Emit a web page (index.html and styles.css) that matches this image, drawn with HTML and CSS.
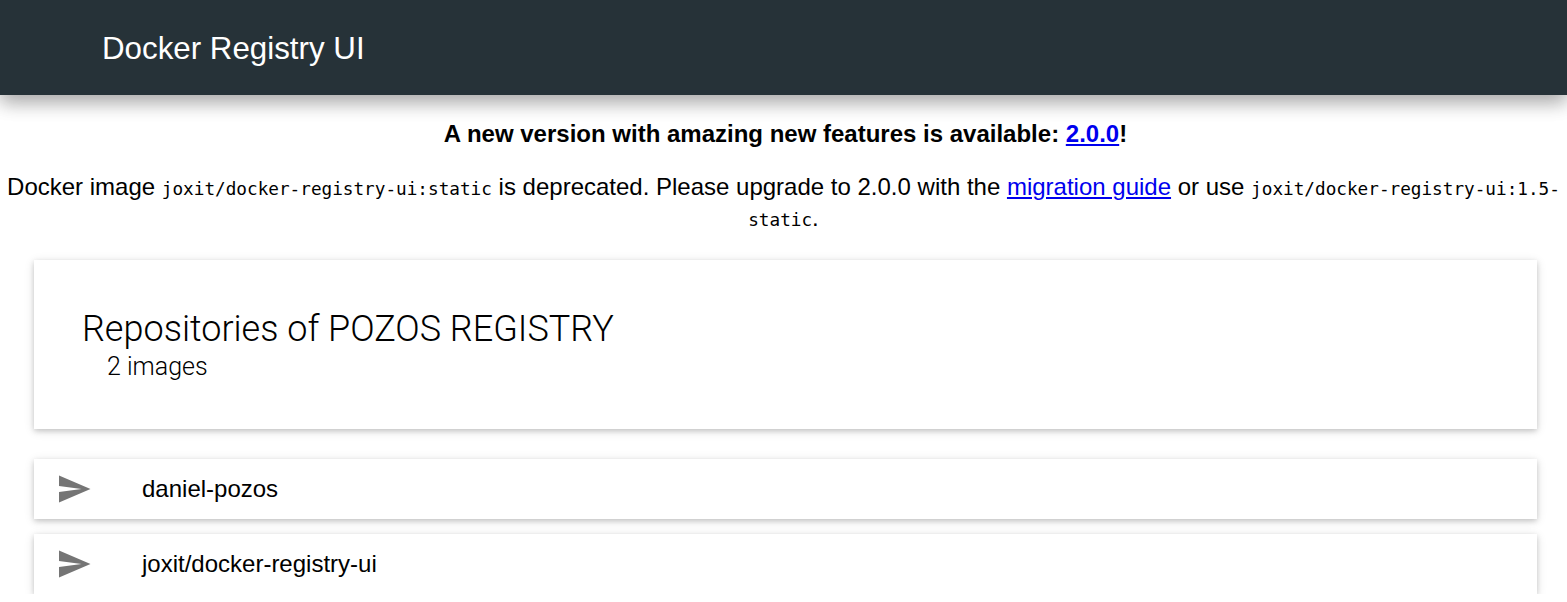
FILE: index.html
```html
<!DOCTYPE html>
<html lang="en">
<head>
<meta charset="utf-8">
<title>Docker Registry UI</title>
<link rel="stylesheet" href="styles.css">
</head>
<body>
<header class="topbar">
  <div class="brand">Docker Registry UI</div>
</header>
<main class="content">
  <p class="notice">A new version with amazing new features is available: <a href="#">2.0.0</a>!</p>
  <p class="deprecation">Docker image <code>joxit/docker-registry-ui:static</code> is deprecated. Please upgrade to 2.0.0 with the <a href="#">migration guide</a> or use <code>joxit/docker-registry-ui:1.5-static</code>.</p>
  <section class="card summary">
    <h2 class="summary-title">Repositories of POZOS REGISTRY</h2>
    <div class="summary-sub">2 images</div>
  </section>
  <ul class="repo-list">
    <li class="card repo">
      <svg class="repo-icon" viewBox="0 0 24 24"><path d="M2.01 21L23 12 2.01 3 2 10l15 2-15 2z"/></svg>
      <span class="repo-name">daniel-pozos</span>
    </li>
    <li class="card repo">
      <svg class="repo-icon" viewBox="0 0 24 24"><path d="M2.01 21L23 12 2.01 3 2 10l15 2-15 2z"/></svg>
      <span class="repo-name">joxit/docker-registry-ui</span>
    </li>
  </ul>
</main>
</body>
</html>
```
FILE: styles.css
```css
html, body {
  margin: 0;
  padding: 0;
  background: #ffffff;
}

body {
  font-family: "Liberation Sans", Arial, sans-serif;
  color: #000;
}

.topbar {
  height: 95px;
  background: #263238;
  box-shadow: 0 8px 17px 0 rgba(0, 0, 0, 0.2), 0 6px 20px 0 rgba(0, 0, 0, 0.19);
  display: flex;
  align-items: center;
  padding-left: 102px;
  position: relative;
  z-index: 2;
}

.brand {
  color: #ffffff;
  font-size: 31.3px;
  line-height: 36px;
  margin-top: 2px;
}

.content {
  padding: 0 30px 0 34px;
}

.notice {
  margin: 25px -30px 0 -34px;
  padding: 0 0 0 4px;
  text-align: center;
  font-weight: bold;
  font-size: 24px;
  line-height: 28px;
}

.notice a,
.deprecation a {
  color: #0000ee;
}

.deprecation {
  margin: 23px -30px 0 -34px;
  padding: 0;
  text-align: center;
  font-size: 24px;
  line-height: 31px;
}

.deprecation code {
  font-family: "DejaVu Sans Mono", "Liberation Mono", monospace;
  font-size: 17.7px;
  line-height: 1;
}

.card {
  background: #ffffff;
  box-shadow: 0 2px 5px 0 rgba(0, 0, 0, 0.16), 0 2px 10px 0 rgba(0, 0, 0, 0.12);
}

.summary {
  margin-top: 27px;
  padding: 48px 48px 47px;
  height: 74px;
}

.summary-title {
  margin: 0;
  font-family: Roboto, "Liberation Sans", sans-serif;
  font-weight: 300;
  font-size: 36px;
  line-height: 42px;
}

.summary-sub {
  margin: 3px 0 0 25px;
  font-family: Roboto, "Liberation Sans", sans-serif;
  font-weight: 300;
  font-size: 25px;
  line-height: 28px;
}

.repo-list {
  list-style: none;
  margin: 30px 0 0;
  padding: 0;
  display: flex;
  flex-direction: column;
  gap: 15px;
}

.repo {
  height: 60px;
  display: flex;
  align-items: center;
  padding-left: 22px;
}

.repo-icon {
  width: 36px;
  height: 36px;
  fill: #757575;
  flex: none;
}

.repo-name {
  margin-left: 50px;
  font-size: 24px;
}
```
